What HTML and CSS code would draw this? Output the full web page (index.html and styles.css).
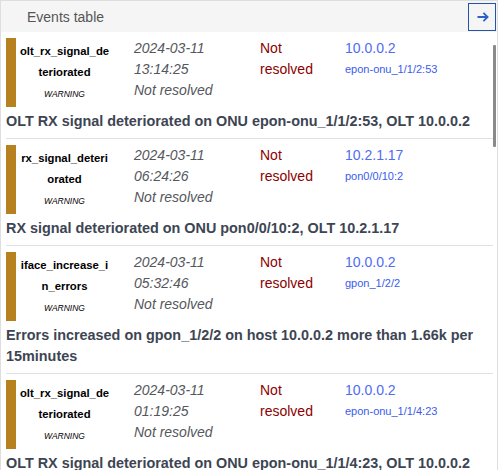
FILE: index.html
```html
<!DOCTYPE html>
<html>
<head>
<meta charset="utf-8">
<link rel="stylesheet" href="styles.css">
</head>
<body>
<div class="panel">
  <div class="panel-header">
    <span class="title">Events table</span>
    <button class="open-btn" aria-label="Open">
      <svg width="12" height="10" viewBox="0 0 12 10"><path d="M0.5 5H10.6M6.4 0.9L10.6 5L6.4 9.1" fill="none" stroke="#2d5fc4" stroke-width="1.8"/></svg>
    </button>
  </div>
  <div class="panel-body">
    <div class="event">
      <div class="event-head">
        <div class="bar"></div>
        <div class="name"><div class="name-text">olt_rx_signal_deteriorated</div><div class="severity">WARNING</div></div>
        <div class="time"><div>2024-03-11</div><div>13:14:25</div><div>Not resolved</div></div>
        <div class="status">Not resolved</div>
        <div class="host"><div class="ip">10.0.0.2</div><div class="iface">epon-onu_1/1/2:53</div></div>
      </div>
      <div class="desc">OLT RX signal deteriorated on ONU epon-onu_1/1/2:53, OLT 10.0.0.2</div>
    </div>
    <div class="event">
      <div class="event-head">
        <div class="bar"></div>
        <div class="name"><div class="name-text">rx_signal_deteriorated</div><div class="severity">WARNING</div></div>
        <div class="time"><div>2024-03-11</div><div>06:24:26</div><div>Not resolved</div></div>
        <div class="status">Not resolved</div>
        <div class="host"><div class="ip">10.2.1.17</div><div class="iface">pon0/0/10:2</div></div>
      </div>
      <div class="desc">RX signal deteriorated on ONU pon0/0/10:2, OLT 10.2.1.17</div>
    </div>
    <div class="event">
      <div class="event-head">
        <div class="bar"></div>
        <div class="name"><div class="name-text">iface_increase_in_errors</div><div class="severity">WARNING</div></div>
        <div class="time"><div>2024-03-11</div><div>05:32:46</div><div>Not resolved</div></div>
        <div class="status">Not resolved</div>
        <div class="host"><div class="ip">10.0.0.2</div><div class="iface">gpon_1/2/2</div></div>
      </div>
      <div class="desc">Errors increased on gpon_1/2/2 on host 10.0.0.2 more than 1.66k per 15minutes</div>
    </div>
    <div class="event">
      <div class="event-head">
        <div class="bar"></div>
        <div class="name"><div class="name-text">olt_rx_signal_deteriorated</div><div class="severity">WARNING</div></div>
        <div class="time"><div>2024-03-11</div><div>01:19:25</div><div>Not resolved</div></div>
        <div class="status">Not resolved</div>
        <div class="host"><div class="ip">10.0.0.2</div><div class="iface">epon-onu_1/1/4:23</div></div>
      </div>
      <div class="desc">OLT RX signal deteriorated on ONU epon-onu_1/1/4:23, OLT 10.0.0.2</div>
    </div>
    <div class="scroll-thumb"></div>
  </div>
</div>
</body>
</html>
```

FILE: styles.css
```css
html, body {
  margin: 0;
  padding: 0;
  background: #ffffff;
}
body {
  font-family: "Liberation Sans", Arial, sans-serif;
}
.panel {
  width: 498px;
  height: 470px;
  box-sizing: border-box;
  border: 1px solid #dedede;
  border-bottom: none;
  overflow: hidden;
  display: flex;
  flex-direction: column;
}
.panel-header {
  height: 31px;
  flex: none;
  background: #f5f5f5;
  display: flex;
  align-items: center;
  justify-content: space-between;
  padding: 0 1px 0 26px;
}
.title {
  font-size: 14px;
  color: #555555;
}
.open-btn {
  width: 28px;
  height: 28px;
  margin: 0;
  padding: 0;
  box-sizing: border-box;
  border: 1px solid #2553a8;
  background: transparent;
  display: flex;
  align-items: center;
  justify-content: center;
}
.open-btn svg {
  margin-left: 1px;
}
.panel-body {
  position: relative;
  flex: 1;
  overflow: hidden;
}
.event {
  margin: 0 4px 0 5px;
  padding: 6px 0 6px;
  border-bottom: 1px solid #e2e2e2;
}
.event-head {
  display: flex;
  height: 69px;
}
.bar {
  width: 10px;
  flex: none;
  background: #b7811f;
}
.name {
  width: 96px;
  flex: none;
  box-sizing: border-box;
  padding: 3px 2px 0 3px;
  text-align: center;
}
.name-text {
  font-size: 11.3px;
  font-weight: bold;
  line-height: 21px;
  color: #000000;
  word-break: break-all;
}
.severity {
  font-size: 8.5px;
  font-style: italic;
  line-height: 23px;
  color: #000000;
}
.time {
  width: 148px;
  flex: none;
  box-sizing: border-box;
  padding-left: 22px;
  font-size: 14px;
  font-style: italic;
  line-height: 21px;
  color: #55575c;
}
.status {
  width: 85px;
  flex: none;
  box-sizing: border-box;
  padding-right: 8px;
  font-size: 14px;
  line-height: 21px;
  color: #8b0000;
}
.host {
  flex: 1;
  line-height: 21px;
}
.ip {
  font-size: 14px;
  color: #4f6cf2;
}
.iface {
  font-size: 11px;
  color: #3a5ced;
}
.desc {
  margin-top: 4px;
  font-size: 14.4px;
  font-weight: bold;
  line-height: 21px;
  color: #3d4553;
}
.scroll-thumb {
  position: absolute;
  top: 13px;
  right: 1px;
  width: 3px;
  height: 102px;
  background: #8a8a8a;
  border-radius: 1px;
}
```
